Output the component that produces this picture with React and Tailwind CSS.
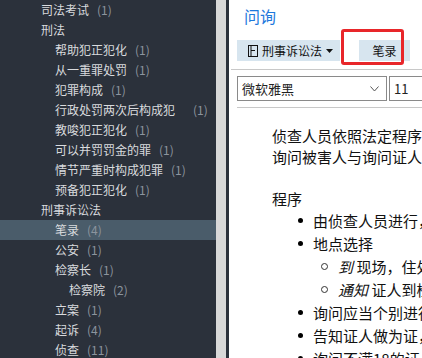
import React from "react";

const tree = [
  { text: "司法考试", count: 1, level: 0 },
  { text: "刑法", level: 0 },
  { text: "帮助犯正犯化", count: 1, level: 1 },
  { text: "从一重罪处罚", count: 1, level: 1 },
  { text: "犯罪构成", count: 1, level: 1 },
  { text: "行政处罚两次后构成犯", count: 1, level: 1, wide: true },
  { text: "教唆犯正犯化", count: 1, level: 1 },
  { text: "可以并罚罚金的罪", count: 1, level: 1 },
  { text: "情节严重时构成犯罪", count: 1, level: 1 },
  { text: "预备犯正犯化", count: 1, level: 1 },
  { text: "刑事诉讼法", level: 0 },
  { text: "笔录", count: 4, level: 1, selected: true },
  { text: "公安", count: 1, level: 1 },
  { text: "检察长", count: 1, level: 1 },
  { text: "检察院", count: 2, level: 2 },
  { text: "立案", count: 1, level: 1 },
  { text: "起诉", count: 4, level: 1 },
  { text: "侦查", count: 11, level: 1 },
];

const indent = ["pl-[41px]", "pl-[55px]", "pl-[69px]"];

function Sidebar() {
  return (
    <div className="w-[216px] shrink-0 bg-[#2b313b] text-[12px] text-[#d9dbde]">
      {tree.map((item, i) => (
        <div
          key={i}
          className={`h-5 flex items-center whitespace-nowrap ${indent[item.level]} ${item.selected ? "bg-[#4a5c6a]" : ""}`}
        >
          <span>{item.text}</span>
          {item.count !== undefined && (
            <span className={`text-[#8c949e] ${item.wide ? "ml-[18px]" : "ml-2"}`}>
              ({item.count})
            </span>
          )}
        </div>
      ))}
    </div>
  );
}

function Dot() {
  return (
    <span className="w-4 shrink-0 flex items-center">
      <span className="w-[5px] h-[5px] rounded-full bg-black ml-[1px]" />
    </span>
  );
}

function Circle() {
  return (
    <span className="w-[17px] shrink-0 flex items-center">
      <span className="w-[7px] h-[7px] rounded-full border border-[#333]" />
    </span>
  );
}

function Editor() {
  return (
    <div className="flex-1 min-w-0 bg-white relative overflow-hidden">
      {/* title */}
      <div className="h-[40px] pl-[15px] pt-[7px] text-[16px] leading-[18px] text-[#1e78dc]">问询</div>

      {/* toolbar */}
      <div className="ml-[8px] flex h-[21px] text-[12px] leading-[21px] text-[#111]">
        <div className="w-[103px] bg-[#d7e5ef] flex items-center pl-[11px]">
          <svg width="10" height="12" viewBox="0 0 10 12" className="shrink-0">
            <rect x="0.5" y="0.5" width="9" height="11" fill="none" stroke="#111" />
            <line x1="3" y1="0.5" x2="3" y2="11.5" stroke="#111" />
            <line x1="3" y1="5.5" x2="7" y2="5.5" stroke="#111" />
          </svg>
          <span className="ml-[4px]">刑事诉讼法</span>
          <svg width="7" height="4" viewBox="0 0 7 4" className="ml-[4px]">
            <path d="M0 0 H7 L3.5 4 Z" fill="#111" />
          </svg>
        </div>
        <div className="w-[19px]" />
        <div className="w-[51px] bg-[#d7e5ef] flex items-center justify-center">笔录</div>
      </div>

      <div className="mt-[8px] ml-[2px] h-px bg-[#c8c8c8]" />

      {/* font row */}
      <div className="mt-[6px] ml-[8px] flex gap-[2px] text-[13px] leading-[23px] text-[#222]">
        <div className="w-[150px] h-[25px] border border-[#8a8a8a] flex items-center justify-between pl-[4px] pr-[7px]">
          <span>微软雅黑</span>
          <svg width="9" height="6" viewBox="0 0 9 6">
            <path d="M0.5 0.5 L4.5 5 L8.5 0.5" fill="none" stroke="#555" />
          </svg>
        </div>
        <div className="flex-1 h-[25px] border border-[#8a8a8a] border-r-0 flex items-center pl-[4px]">11</div>
      </div>

      <div className="mt-[6px] ml-[8px] h-px bg-[#c8c8c8]" />

      {/* document */}
      <div className="pl-[43px] pt-[17px] text-[15px] leading-[21px] text-[#111] whitespace-nowrap">
        <p>侦查人员依照法定程序，以言词方式向证人调查了解案件情况</p>
        <p>询问被害人与询问证人的程序相同</p>
        <p className="h-[21px]" />
        <p>程序</p>
        <ul className="pl-[25px] leading-[23px]">
          <li className="flex">
            <Dot />
            <span>由侦查人员进行，不得少于二人</span>
          </li>
          <li>
            <div className="flex">
              <Dot />
              <span>地点选择</span>
            </div>
            <ul className="pl-[24px]">
              <li className="flex">
                <Circle />
                <span><i>到</i> 现场，住处或者其提出的地点</span>
              </li>
              <li className="flex">
                <Circle />
                <span><i>通知</i> 证人到检察院或公安机关</span>
              </li>
            </ul>
          </li>
          <li className="flex">
            <Dot />
            <span>询问应当个别进行</span>
          </li>
          <li className="flex">
            <Dot />
            <span>告知证人做为证，应当如实提供证据</span>
          </li>
          <li className="flex">
            <Dot />
            <span>询问不满18的证人，应当通知其法定代理人</span>
          </li>
        </ul>
      </div>

      {/* red annotation box */}
      <div className="absolute left-[112px] top-[29px] w-[63px] h-[36px] border-[3px] border-[#e8262a] rounded-[3px]" />
    </div>
  );
}

export default function App() {
  return (
    <div
      className="w-[422px] h-[358px] flex overflow-hidden"
      style={{ fontFamily: '"Noto Sans CJK SC", "Noto Sans", sans-serif' }}
    >
      <Sidebar />
      <div className="w-[10px] shrink-0 bg-[#d8d8d8]" />
      <div className="w-[3px] shrink-0 bg-[#2b313b]" />
      <Editor />
    </div>
  );
}
